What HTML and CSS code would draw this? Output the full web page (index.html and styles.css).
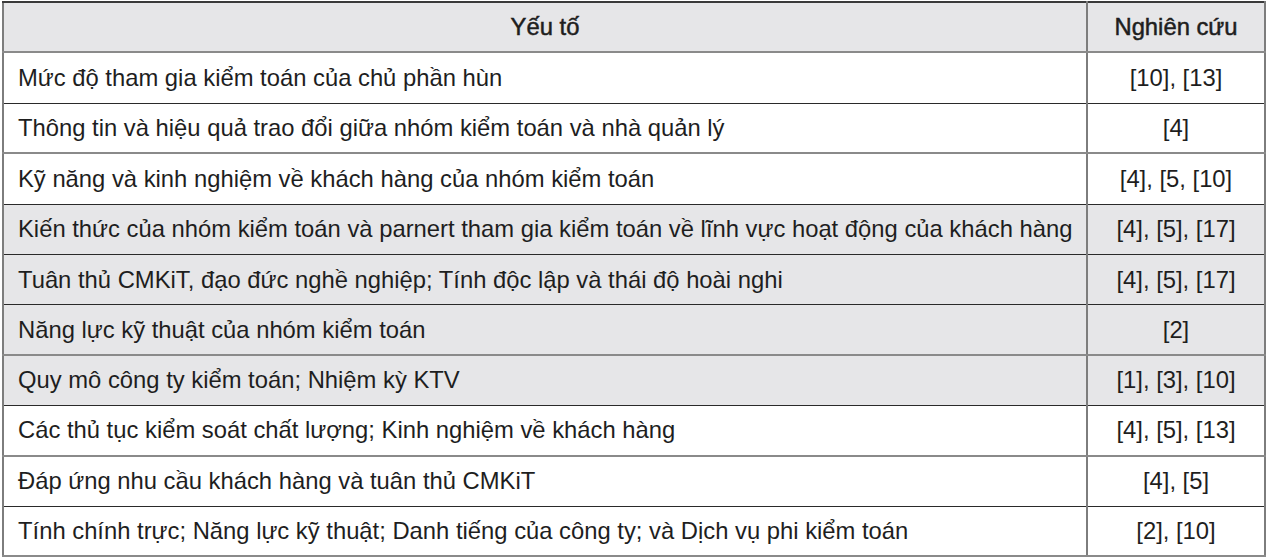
FILE: index.html
```html
<!DOCTYPE html>
<html lang="vi">
<head>
<meta charset="utf-8">
<link rel="stylesheet" href="styles.css">
</head>
<body>
<table class="tbl">
  <thead>
    <tr class="head"><th class="c1">Yếu tố</th><th class="c2">Nghiên cứu</th></tr>
  </thead>
  <tbody>
    <tr class="dark"><td class="c1">Mức độ tham gia kiểm toán của chủ phần hùn</td><td class="c2">[10], [13]</td></tr>
    <tr class="gray"><td class="c1">Thông tin và hiệu quả trao đổi giữa nhóm kiểm toán và nhà quản lý</td><td class="c2">[4]</td></tr>
    <tr class="dark"><td class="c1">Kỹ năng và kinh nghiệm về khách hàng của nhóm kiểm toán</td><td class="c2">[4], [5, [10]</td></tr>
    <tr class="shade dark"><td class="c1">Kiến thức của nhóm kiểm toán và parnert tham gia kiểm toán về lĩnh vực hoạt động của khách hàng</td><td class="c2">[4], [5], [17]</td></tr>
    <tr class="shade dark"><td class="c1">Tuân thủ CMKiT, đạo đức nghề nghiệp; Tính độc lập và thái độ hoài nghi</td><td class="c2">[4], [5], [17]</td></tr>
    <tr class="shade gray"><td class="c1">Năng lực kỹ thuật của nhóm kiểm toán</td><td class="c2">[2]</td></tr>
    <tr class="shade dark"><td class="c1">Quy mô công ty kiểm toán; Nhiệm kỳ KTV</td><td class="c2">[1], [3], [10]</td></tr>
    <tr class="gray"><td class="c1">Các thủ tục kiểm soát chất lượng; Kinh nghiệm về khách hàng</td><td class="c2">[4], [5], [13]</td></tr>
    <tr class="dark"><td class="c1">Đáp ứng nhu cầu khách hàng và tuân thủ CMKiT</td><td class="c2">[4], [5]</td></tr>
    <tr class="gray"><td class="c1">Tính chính trực; Năng lực kỹ thuật; Danh tiếng của công ty; và Dịch vụ phi kiểm toán</td><td class="c2">[2], [10]</td></tr>
  </tbody>
</table>
</body>
</html>
```
FILE: styles.css
```css
html, body {
  margin: 0;
  padding: 0;
  background: #ffffff;
}
body {
  padding: 1px 0 0 2px;
  font-family: "Liberation Sans", Arial, sans-serif;
  color: #1e1e1e;
}
.tbl {
  border-collapse: collapse;
  width: 1264px;
  border-left: 2px solid #7d7d7d;
  border-right: 2px solid #7d7d7d;
  border-top: 2px solid #3a3a3a;
}
.tbl th, .tbl td {
  height: 49.4px;
  padding: 0;
  font-size: 23.8px;
  line-height: 28px;
  vertical-align: middle;
  border-bottom: 1px solid #2a2a2a;
  white-space: nowrap;
}
.tbl th {
  font-weight: normal;
  -webkit-text-stroke: 0.5px #1e1e1e;
  background: #e6e6e8;
  height: 48.4px;
  border-bottom: 2px solid #8a8a8a;
  text-align: center;
}
.tbl td.c1 {
  text-align: left;
  padding-left: 14px;
}
.tbl .c2 {
  width: 176px;
  text-align: center;
  border-left: 2px solid #7d7d7d;
}
.tbl tr.gray td {
  border-bottom: 2px solid #8a8a8a;
  height: 48.4px;
}
.tbl tr.shade td {
  background: #e6e6e8;
}
```
